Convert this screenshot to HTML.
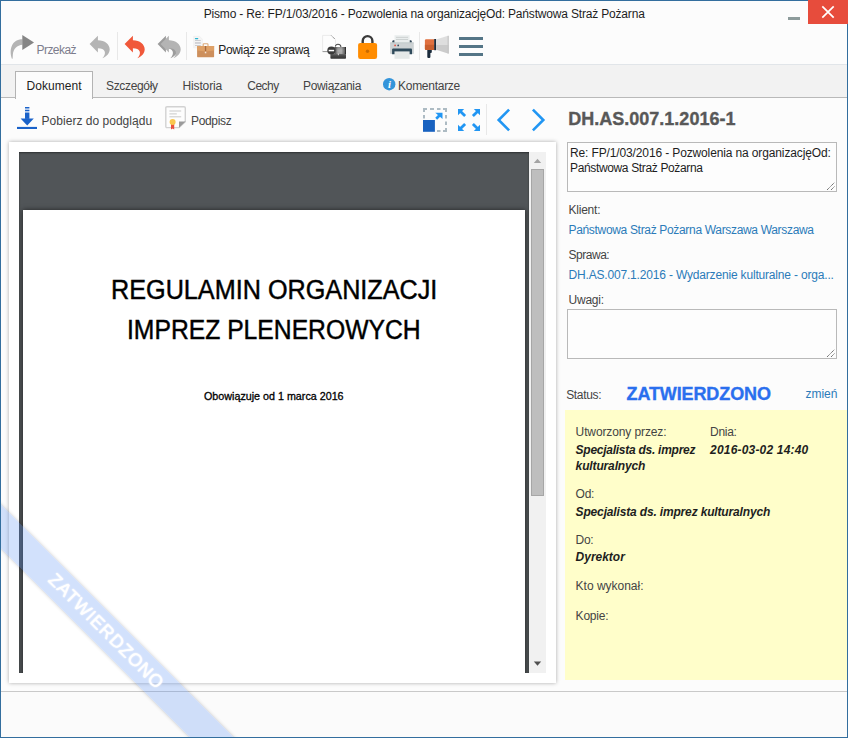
<!DOCTYPE html>
<html lang="pl"><head><meta charset="utf-8"><title>Pismo</title>
<style>
html,body{margin:0;padding:0;}
body{width:848px;height:738px;position:relative;overflow:hidden;background:#fcfcfc;font-family:"Liberation Sans",sans-serif;}
.a{position:absolute;}
.t{position:absolute;white-space:pre;font-family:"Liberation Sans",sans-serif;}
svg{position:absolute;overflow:visible;}

</style></head>
<body>
<!-- window frame -->
<!-- status bar -->
<div class="a" style="left:1px;top:691px;width:846px;height:1px;background:#c9c9c9;"></div>
<div class="a" style="left:1px;top:692px;width:846px;height:45px;background:#fbfbfb;"></div>
<!-- toolbar bottom line -->
<div class="a" style="left:1px;top:64px;width:846px;height:1px;background:#e1e5e9;"></div>
<!-- tab strip -->
<div class="a" style="left:1px;top:65px;width:846px;height:32px;background:#f2f2f2;"></div>
<div class="a" style="left:1px;top:97px;width:846px;height:1px;background:#b9b9b9;"></div>
<div class="a" style="left:15px;top:71px;width:76px;height:27px;background:#fcfcfc;border:1px solid #b3b3b3;border-bottom:none;"></div>
<!-- toolbar separators -->
<div class="a" style="left:117px;top:32px;width:1px;height:28px;background:#e8e8e8;"></div>
<div class="a" style="left:186px;top:32px;width:1px;height:28px;background:#e8e8e8;"></div>
<div class="a" style="left:419px;top:32px;width:1px;height:28px;background:#e8e8e8;"></div>
<div class="a" style="left:486px;top:104px;width:1px;height:31px;background:#e8e8e8;"></div>

<!-- ICONS: main toolbar -->
<!-- forward -->
<svg style="left:10px;top:35px" width="24" height="24" viewBox="0 0 24 24">
 <path d="M1.9 23.7 C-1.2 15 1.5 4.3 12.6 4.3 L12.6 9.7 C7 10 3.2 14 2.9 19.3 L2.6 23.7 Z" fill="#b4b4b4"/>
 <path d="M12.3 0 L24 7.4 L12.3 15 Z" fill="#858585"/>
</svg>
<!-- reply grey -->
<svg style="left:90px;top:36px" width="20" height="23" viewBox="0 0 20 23"><path d="M-0.4 8.1 L7.9 -0.2 L7.9 4.2 C15 4.2 19.7 8.5 19.7 13.3 C19.7 17 17 20.3 12.4 22.3 C14.6 19.8 15.4 17.8 14.7 15.6 C13.8 13 11.5 12.2 7.9 12.2 L7.9 16.5 Z" fill="#b4b4b4"/></svg>
<!-- reply red -->
<svg style="left:125px;top:36px" width="20" height="23" viewBox="0 0 20 23"><path d="M-0.4 8.1 L7.9 -0.2 L7.9 4.2 C15 4.2 19.7 8.5 19.7 13.3 C19.7 17 17 20.3 12.4 22.3 C14.6 19.8 15.4 17.8 14.7 15.6 C13.8 13 11.5 12.2 7.9 12.2 L7.9 16.5 Z" fill="#f0583a"/></svg>
<!-- reply all -->
<svg style="left:158px;top:36px" width="23" height="23" viewBox="0 0 23 23">
 <path d="M-0.4 8.1 L7.9 -0.2 L7.9 4.2 C15 4.2 19.7 8.5 19.7 13.3 C19.7 17 17 20.3 12.4 22.3 C14.6 19.8 15.4 17.8 14.7 15.6 C13.8 13 11.5 12.2 7.9 12.2 L7.9 16.5 Z" fill="#9c9c9c"/>
 <g transform="translate(3,0)"><path d="M-0.4 8.1 L7.9 -0.2 L7.9 4.2 C15 4.2 19.7 8.5 19.7 13.3 C19.7 17 17 20.3 12.4 22.3 C14.6 19.8 15.4 17.8 14.7 15.6 C13.8 13 11.5 12.2 7.9 12.2 L7.9 16.5 Z" fill="#b4b4b4"/></g>
</svg>
<!-- briefcase with doc -->
<svg style="left:193px;top:35px" width="22" height="23" viewBox="0 0 22 23">
 <path d="M0.7 1.3 L6.6 1.3 L9.3 4 L9.3 12.8 L0.7 12.8 Z" fill="#f5f5f5" stroke="#ececec" stroke-width="0.6"/>
 <rect x="1.9" y="3" width="3.4" height="1.2" rx="0.4" fill="#2bb5d0"/>
 <rect x="2" y="5.2" width="5.8" height="0.8" fill="#c2c2c6"/>
 <rect x="2" y="7" width="5.8" height="1.9" fill="#d2d2d6"/>
 <rect x="2" y="10" width="5.8" height="0.8" fill="#c2c2c6"/>
 <path d="M10.2 11 L10.2 9.6 Q10.2 8.8 11 8.8 L14.2 8.8 Q15 8.8 15 9.6 L15 11" fill="none" stroke="#dba878" stroke-width="1.1"/>
 <rect x="4.1" y="11" width="17" height="11.2" rx="0.6" fill="#cd8f5c"/>
 <path d="M4.1 11.6 Q4.1 11 4.7 11 L20.5 11 Q21.1 11 21.1 11.6 L21.1 15.6 L12.6 16.4 L4.1 15.6 Z" fill="#dea066"/>
 <rect x="11.9" y="11" width="1.3" height="5" fill="#a5683e"/>
 <rect x="11.8" y="16.8" width="1.5" height="1.5" fill="#f1e4da"/>
</svg>
<!-- doc with folder/minus -->
<svg style="left:322px;top:35px" width="24" height="24" viewBox="0 0 24 24">
 <defs>
 <linearGradient id="gt" x1="0" y1="0" x2="1" y2="0"><stop offset="0" stop-color="#4a4a4a"/><stop offset="0.3" stop-color="#a8a8a8"/><stop offset="0.6" stop-color="#b4b4b4"/><stop offset="0.88" stop-color="#6a6a6a"/><stop offset="0.93" stop-color="#333"/><stop offset="1" stop-color="#333"/></linearGradient>
 <linearGradient id="gb" x1="0" y1="0" x2="0" y2="1"><stop offset="0" stop-color="#6a6a6a"/><stop offset="0.35" stop-color="#4a4a4a"/><stop offset="1" stop-color="#333"/></linearGradient>
 <linearGradient id="gv" x1="0" y1="0" x2="0" y2="1"><stop offset="0" stop-color="#000" stop-opacity="0.18"/><stop offset="0.5" stop-color="#000" stop-opacity="0"/><stop offset="1" stop-color="#000" stop-opacity="0.1"/></linearGradient>
 </defs>
 <path d="M0.6 0.4 L9.3 0.4 L13.5 4.6 L13.5 16.6 L0.6 16.6 Z" fill="#fdfdfd" stroke="#e6e6e6" stroke-width="0.8"/>
 <path d="M0.6 16.6 L6 16.6" stroke="#8c8c8c" stroke-width="0.9" fill="none"/>
 <path d="M9.4 0.6 L13.3 4.5" stroke="#555" stroke-width="0.8" stroke-dasharray="1 0.9" fill="none"/>
 <path d="M13.4 11.6 C13.4 8.4 18.4 8.4 19 11.8" fill="none" stroke="#4a4a4a" stroke-width="1.1"/>
 <rect x="12.4" y="12" width="11.6" height="7.5" fill="url(#gt)"/>
 <rect x="12.4" y="12" width="11.6" height="7.5" fill="url(#gv)"/>
 <path d="M8.4 19 L24 19 L24 23 Q24 23.8 23.2 23.8 L9.2 23.8 Q8.4 23.8 8.4 23 Z" fill="url(#gb)"/>
 <rect x="15.8" y="18.4" width="1.2" height="1.8" fill="#c8c8c8"/>
 <circle cx="9.4" cy="15.5" r="4.1" fill="#3a3a3a"/>
 <rect x="6.7" y="14.8" width="5.4" height="1.5" fill="#fff"/>
</svg>
<!-- lock -->
<svg style="left:358px;top:34px" width="19" height="25" viewBox="0 0 19 25">
 <path d="M4.7 10 L4.7 6.95 A4.85 4.85 0 0 1 14.4 6.95 L14.4 10" fill="none" stroke="#3a3a3a" stroke-width="2.4"/>
 <rect x="0.1" y="8.9" width="19" height="16.1" rx="2.2" fill="#ff8c00"/>
 <circle cx="9.5" cy="17.2" r="1.7" fill="#c96a00"/>
</svg>
<!-- printer -->
<svg style="left:390px;top:35px" width="24" height="24" viewBox="0 0 24 24">
 <path d="M2.3 7.8 L2.3 6.4 Q2.3 5.2 3.5 5.2 L4.8 5.2 L4.8 7.8 Z" fill="#34495a"/>
 <path d="M21.8 7.8 L21.8 6.4 Q21.8 5.2 20.6 5.2 L19.3 5.2 L19.3 7.8 Z" fill="#34495a"/>
 <rect x="4.5" y="0.2" width="15.1" height="7.6" fill="#e9eded"/>
 <rect x="6" y="1.9" width="12" height="0.8" fill="#c6cbcb"/>
 <rect x="6" y="4" width="12" height="0.8" fill="#c6cbcb"/>
 <rect x="0.1" y="7.5" width="23.7" height="11.6" rx="0.8" fill="#cdd2d4"/>
 <rect x="0.1" y="7.5" width="23.7" height="0.7" fill="#b5c3c3" opacity="0.8"/>
 <path d="M2.1 14.6 Q2.1 13.6 3.1 13.6 L21 13.6 Q22 13.6 22 14.6 L22 19.3 L2.1 19.3 Z" fill="#2f4a5b"/>
 <rect x="4.5" y="16.4" width="15.1" height="7.4" fill="#e4e8e8"/>
 <circle cx="5.1" cy="10.4" r="0.85" fill="#e74c3c"/>
 <circle cx="8.2" cy="10.4" r="0.85" fill="#34495a"/>
</svg>
<!-- megaphone -->
<svg style="left:424px;top:35px" width="26" height="24" viewBox="0 0 26 24">
 <path d="M3.3 14.6 L6.4 14.6 L6.4 22 Q6.4 23 5.4 23 L4.3 23 Q3.3 23 3.3 22 Z" fill="#1b2c3c"/>
 <path d="M6 14.6 L7.8 14.6 L7.8 17 Q7.8 18 6.8 18 L6 18 Z" fill="#1b2c3c"/>
 <path d="M2 4.3 L10.4 4.3 L10.4 15 L2 15 Q0.9 15 0.9 13.8 L0.9 5.5 Q0.9 4.3 2 4.3 Z" fill="#e0703f"/>
 <path d="M0.9 9.8 L10.4 9.8 L10.4 15 L2 15 Q0.9 15 0.9 13.8 Z" fill="#c95f2e"/>
 <rect x="10.2" y="4" width="1.9" height="11.2" fill="#1b2c3c"/>
 <path d="M12.1 4.4 L24.7 0.6 L24.7 9.8 L12.1 9.8 Z" fill="#dedede"/>
 <path d="M12.1 9.8 L24.7 9.8 L24.7 18.8 L12.1 14.8 Z" fill="#cbcbcb"/>
 <rect x="23.6" y="0.9" width="1.1" height="17.6" fill="#c2c2c2"/>
</svg>
<!-- hamburger -->
<div class="a" style="left:459px;top:37px;width:24px;height:3px;background:#547586;"></div>
<div class="a" style="left:459px;top:45px;width:24px;height:3px;background:#547586;"></div>
<div class="a" style="left:459px;top:53px;width:24px;height:3px;background:#547586;"></div>

<!-- info icon -->
<svg style="left:382.7px;top:77.7px" width="12.4" height="12.4" viewBox="0 0 12 12"><circle cx="6" cy="6" r="6" fill="#3394da"/><text x="6.2" y="9.8" font-family="Liberation Serif, serif" font-weight="bold" font-style="italic" font-size="10.5" fill="#fff" text-anchor="middle">i</text></svg>

<!-- doc toolbar icons -->
<!-- download -->
<svg style="left:17px;top:106px" width="20" height="24" viewBox="0 0 20 24">
 <g fill="#1a62c9"><rect x="8" y="1" width="4.4" height="1.5"/><rect x="8" y="3.7" width="4.4" height="1.6"/><rect x="8" y="6.5" width="4.4" height="6.4"/>
 <path d="M3.6 12.6 L16.8 12.6 L10.2 19.4 Z"/><rect x="0" y="20.9" width="20" height="2.1"/></g>
</svg>
<!-- certificate -->
<svg style="left:165px;top:106px" width="22" height="24" viewBox="0 0 22 24">
 <path d="M2 0.8 L19 0.8 Q20.3 0.8 20.3 2 L20.3 15.6 L14 21.6 L2 21.6 Q0.8 21.6 0.8 20.4 L0.8 2 Q0.8 0.8 2 0.8 Z" fill="#fdfdfd" stroke="#d2d2d2" stroke-width="1.4"/>
 <path d="M20.6 15.4 L14 15.4 L14 21.8 Z" fill="#9b9b9b"/>
 <rect x="4.4" y="4.5" width="11.8" height="1" fill="#c9c9c9"/>
 <rect x="4.4" y="7.4" width="7.4" height="1" fill="#c9c9c9"/>
 <rect x="4.4" y="10.3" width="11.8" height="1" fill="#c9c9c9"/>
 <path d="M6 18 L9.2 18 L9.2 23.6 L7.6 22.4 L6 23.6 Z" fill="#e8503f"/>
 <circle cx="7.6" cy="15.9" r="3" fill="#f9c74f"/>
</svg>
<!-- resize icon -->
<svg style="left:423px;top:108px" width="24" height="24" viewBox="0 0 24 24">
 <path d="M0 1 H4 M7 1 H11 M14 1 H17.5 M20 1 H24 M23 0 V4 M23 7 V10.5 M23 13.5 V17 M23 20 V24 M1 0 V4 M1 7 V10.5 M14 23 H17.5 M20 23 H24" fill="none" stroke="#adbbc3" stroke-width="2"/>
 <rect x="0" y="12" width="11.9" height="11.8" fill="#1862c0"/>
 <path d="M13.2 10.7 L17.2 6.8" stroke="#2196f3" stroke-width="2.7" fill="none"/>
 <path d="M12.3 4.7 L19.5 4.7 L19.5 11 Z" fill="#2196f3"/>
</svg>
<!-- fullscreen -->
<svg style="left:457.9px;top:109px" width="22" height="22" viewBox="0 0 22 21.9">
 <g fill="none" stroke="#2196f3" stroke-width="2.8">
  <path d="M2 2 L7.1 7"/><path d="M20 2 L14.9 7"/><path d="M2 19.9 L7.1 14.9"/><path d="M20 19.9 L14.9 14.9"/>
 </g>
 <g fill="#2196f3"><path d="M0 0 L6.2 0 L0 6.1 Z"/><path d="M22 0 L15.8 0 L22 6.1 Z"/><path d="M0 21.9 L6.2 21.9 L0 15.8 Z"/><path d="M22 21.9 L15.8 21.9 L22 15.8 Z"/></g>
</svg>
<!-- chevrons -->
<svg style="left:497px;top:109px" width="13" height="22" viewBox="0 0 13 22"><path d="M12.1 0.6 L1.7 11 L12.1 21.4" fill="none" stroke="#2196f3" stroke-width="2.6"/></svg>
<svg style="left:532px;top:109px" width="13" height="22" viewBox="0 0 13 22"><path d="M0.9 0.6 L11.3 11 L0.9 21.4" fill="none" stroke="#2196f3" stroke-width="2.6"/></svg>

<!-- document panel -->
<div class="a" style="left:9px;top:142px;width:547px;height:541px;background:#fff;box-shadow:0 0 4px rgba(0,0,0,0.33);"></div>
<div class="a" style="left:19px;top:152px;width:510px;height:521px;background:#515558;"></div>
<div class="a" style="left:19px;top:152px;width:510px;height:521px;overflow:hidden;box-shadow:inset 0 1px 2px rgba(0,0,0,0.45);"><div class="a" style="left:4px;top:58px;width:502px;height:470px;background:#fff;box-shadow:0 0 5px rgba(0,0,0,0.6);"></div></div>
<!-- scrollbar -->
<div class="a" style="left:529px;top:152px;width:17px;height:521px;background:#f1f1f1;"></div>
<div class="a" style="left:531px;top:169px;width:13px;height:327px;background:#bebebe;border:1px solid #a6a6a6;box-sizing:border-box;"></div>
<svg style="left:529px;top:152px" width="17" height="521"><path d="M4.8 11 L12.2 11 L8.5 6.8 Z" fill="#a3a3a3"/><path d="M4.8 509.6 L12.2 509.6 L8.5 513.8 Z" fill="#505050"/></svg>

<!-- right panel fields -->
<div class="a" style="left:567px;top:142px;width:270px;height:50px;box-sizing:border-box;border:1px solid #b9b9b9;background:#fdfdfd;"></div>
<div class="a" style="left:567px;top:309px;width:270px;height:50px;box-sizing:border-box;border:1px solid #b9b9b9;background:#fdfdfd;"></div>
<svg style="left:826px;top:181px" width="10" height="10"><path d="M1 9 L8.5 1.5 M5 9 L8.5 5.5" stroke="#4a4a4a" stroke-width="0.9" stroke-dasharray="1.2 0.6" fill="none"/></svg>
<svg style="left:826px;top:348px" width="10" height="10"><path d="M1 9 L8.5 1.5 M5 9 L8.5 5.5" stroke="#4a4a4a" stroke-width="0.9" stroke-dasharray="1.2 0.6" fill="none"/></svg>
<!-- yellow box -->
<div class="a" style="left:565px;top:409.5px;width:282px;height:270px;background:#fffeca;"></div>

<!-- ribbon -->
<div class="a" style="left:-129px;top:616px;width:470px;height:31px;background:rgba(88,144,243,0.27);transform:rotate(45deg);transform-origin:50% 50%;text-align:center;color:#fff;font-size:18px;line-height:30px;letter-spacing:0.85px;text-shadow:0 0 2px #fff, 0 0 1px #fff;box-shadow:0 0 4px rgba(0,0,0,0.2);">ZATWIERDZONO</div>
<!-- window frame -->
<div class="a" style="left:0;top:0;width:846px;height:736px;border:1px solid #336e9e;"></div>
<!-- close / minimize -->
<div class="a" style="left:808px;top:0;width:40px;height:24px;background:#e74c3c;"></div>
<svg style="left:808px;top:0" width="40" height="24"><path d="M14.3 6.3 L25.7 17.7 M25.7 6.3 L14.3 17.7" stroke="#fff" stroke-width="1.7" fill="none"/></svg>
<div class="a" style="left:788px;top:17px;width:12px;height:3px;background:#8d9b9b;"></div>

<!-- texts -->
<div class="t" style="left:203.7px;top:6.00px;font-size:12px;line-height:16px;color:#1e1e1e;letter-spacing:-0.176px;">Pismo - Re: FP/1/03/2016 - Pozwolenia na organizacjęOd: Państwowa Straż Pożarna</div>
<div class="t" style="left:36.5px;top:42.00px;font-size:12px;line-height:16px;color:#7c7c8c;letter-spacing:-0.551px;">Przekaż</div>
<div class="t" style="left:218.3px;top:42.00px;font-size:12px;line-height:16px;color:#1e1e1e;letter-spacing:-0.357px;">Powiąż ze sprawą</div>
<div class="t" style="left:26.6px;top:78.00px;font-size:12px;line-height:16px;color:#1e1e1e;letter-spacing:0.037px;">Dokument</div>
<div class="t" style="left:106.0px;top:78.00px;font-size:12px;line-height:16px;color:#444;letter-spacing:-0.334px;">Szczegóły</div>
<div class="t" style="left:182.5px;top:78.00px;font-size:12px;line-height:16px;color:#444;letter-spacing:-0.136px;">Historia</div>
<div class="t" style="left:247.3px;top:78.00px;font-size:12px;line-height:16px;color:#444;letter-spacing:-0.523px;">Cechy</div>
<div class="t" style="left:303.0px;top:78.00px;font-size:12px;line-height:16px;color:#444;letter-spacing:-0.338px;">Powiązania</div>
<div class="t" style="left:398.0px;top:78.00px;font-size:12px;line-height:16px;color:#444;letter-spacing:-0.270px;">Komentarze</div>
<div class="t" style="left:41.6px;top:113.00px;font-size:12px;line-height:16px;color:#444;letter-spacing:0.021px;">Pobierz do podglądu</div>
<div class="t" style="left:191.0px;top:113.00px;font-size:12px;line-height:16px;color:#444;letter-spacing:-0.343px;">Podpisz</div>
<div class="t" style="left:568.2px;top:108.00px;font-size:18px;line-height:23px;color:#585858;letter-spacing:0.011px;font-weight:bold;-webkit-text-stroke:0.35px #585858;">DH.AS.007.1.2016-1</div>
<div class="t" style="left:570.0px;top:145.00px;font-size:12px;line-height:16px;color:#1e1e1e;letter-spacing:-0.130px;">Re: FP/1/03/2016 - Pozwolenia na organizacjęOd:</div>
<div class="t" style="left:570.0px;top:160.00px;font-size:12px;line-height:16px;color:#1e1e1e;letter-spacing:-0.354px;">Państwowa Straż Pożarna</div>
<div class="t" style="left:568.5px;top:202.00px;font-size:12px;line-height:16px;color:#444;letter-spacing:-0.223px;">Klient:</div>
<div class="t" style="left:568.5px;top:222.00px;font-size:12px;line-height:16px;color:#2b7bb9;letter-spacing:-0.326px;">Państwowa Straż Pożarna Warszawa Warszawa</div>
<div class="t" style="left:568.5px;top:247.00px;font-size:12px;line-height:16px;color:#444;letter-spacing:-0.476px;">Sprawa:</div>
<div class="t" style="left:568.5px;top:267.00px;font-size:12px;line-height:16px;color:#2b7bb9;letter-spacing:-0.175px;">DH.AS.007.1.2016 - Wydarzenie kulturalne - orga...</div>
<div class="t" style="left:568.5px;top:292.00px;font-size:12px;line-height:16px;color:#444;letter-spacing:-0.215px;">Uwagi:</div>
<div class="t" style="left:566.2px;top:387.00px;font-size:12px;line-height:16px;color:#444;letter-spacing:-0.337px;">Status:</div>
<div class="t" style="left:626.5px;top:383.00px;font-size:18px;line-height:23px;color:#2a6fee;letter-spacing:-0.113px;font-weight:bold;-webkit-text-stroke:0.35px #2a6fee;">ZATWIERDZONO</div>
<div class="t" style="left:805.5px;top:386.00px;font-size:12px;line-height:16px;color:#2b7bb9;letter-spacing:-0.043px;">zmień</div>
<div class="t" style="left:575.6px;top:424.00px;font-size:12px;line-height:16px;color:#444;letter-spacing:-0.113px;">Utworzony przez:</div>
<div class="t" style="left:710.1px;top:424.00px;font-size:12px;line-height:16px;color:#444;letter-spacing:-0.303px;">Dnia:</div>
<div class="t" style="left:575.6px;top:442.00px;font-size:12px;line-height:16px;color:#1e1e1e;letter-spacing:-0.263px;font-weight:bold;font-style:italic;">Specjalista ds. imprez</div>
<div class="t" style="left:710.1px;top:442.00px;font-size:12px;line-height:16px;color:#1e1e1e;letter-spacing:0.180px;font-weight:bold;font-style:italic;">2016-03-02 14:40</div>
<div class="t" style="left:575.6px;top:458.00px;font-size:12px;line-height:16px;color:#1e1e1e;letter-spacing:-0.138px;font-weight:bold;font-style:italic;">kulturalnych</div>
<div class="t" style="left:575.6px;top:486.00px;font-size:12px;line-height:16px;color:#444;letter-spacing:-0.248px;">Od:</div>
<div class="t" style="left:575.6px;top:504.00px;font-size:12px;line-height:16px;color:#1e1e1e;letter-spacing:-0.159px;font-weight:bold;font-style:italic;">Specjalista ds. imprez kulturalnych</div>
<div class="t" style="left:575.6px;top:532.00px;font-size:12px;line-height:16px;color:#444;letter-spacing:-0.362px;">Do:</div>
<div class="t" style="left:575.6px;top:549.00px;font-size:12px;line-height:16px;color:#1e1e1e;letter-spacing:-0.020px;font-weight:bold;font-style:italic;">Dyrektor</div>
<div class="t" style="left:575.6px;top:578.00px;font-size:12px;line-height:16px;color:#444;letter-spacing:-0.012px;">Kto wykonał:</div>
<div class="t" style="left:575.6px;top:608.00px;font-size:12px;line-height:16px;color:#444;letter-spacing:-0.222px;">Kopie:</div>
<div class="t" style="left:110.6px;top:273.00px;font-size:26.8px;line-height:35px;color:#000;-webkit-text-stroke:0.45px #000;transform:scaleX(0.9408);transform-origin:0 0;">REGULAMIN ORGANIZACJI</div>
<div class="t" style="left:127.4px;top:313.00px;font-size:26.8px;line-height:35px;color:#000;-webkit-text-stroke:0.45px #000;transform:scaleX(0.9215);transform-origin:0 0;">IMPREZ PLENEROWYCH</div>
<div class="t" style="left:203.8px;top:389.00px;font-size:10.8px;line-height:14px;color:#000;-webkit-text-stroke:0.3px #000;transform:scaleX(0.9939);transform-origin:0 0;">Obowiązuje od 1 marca 2016</div>
</body></html>
